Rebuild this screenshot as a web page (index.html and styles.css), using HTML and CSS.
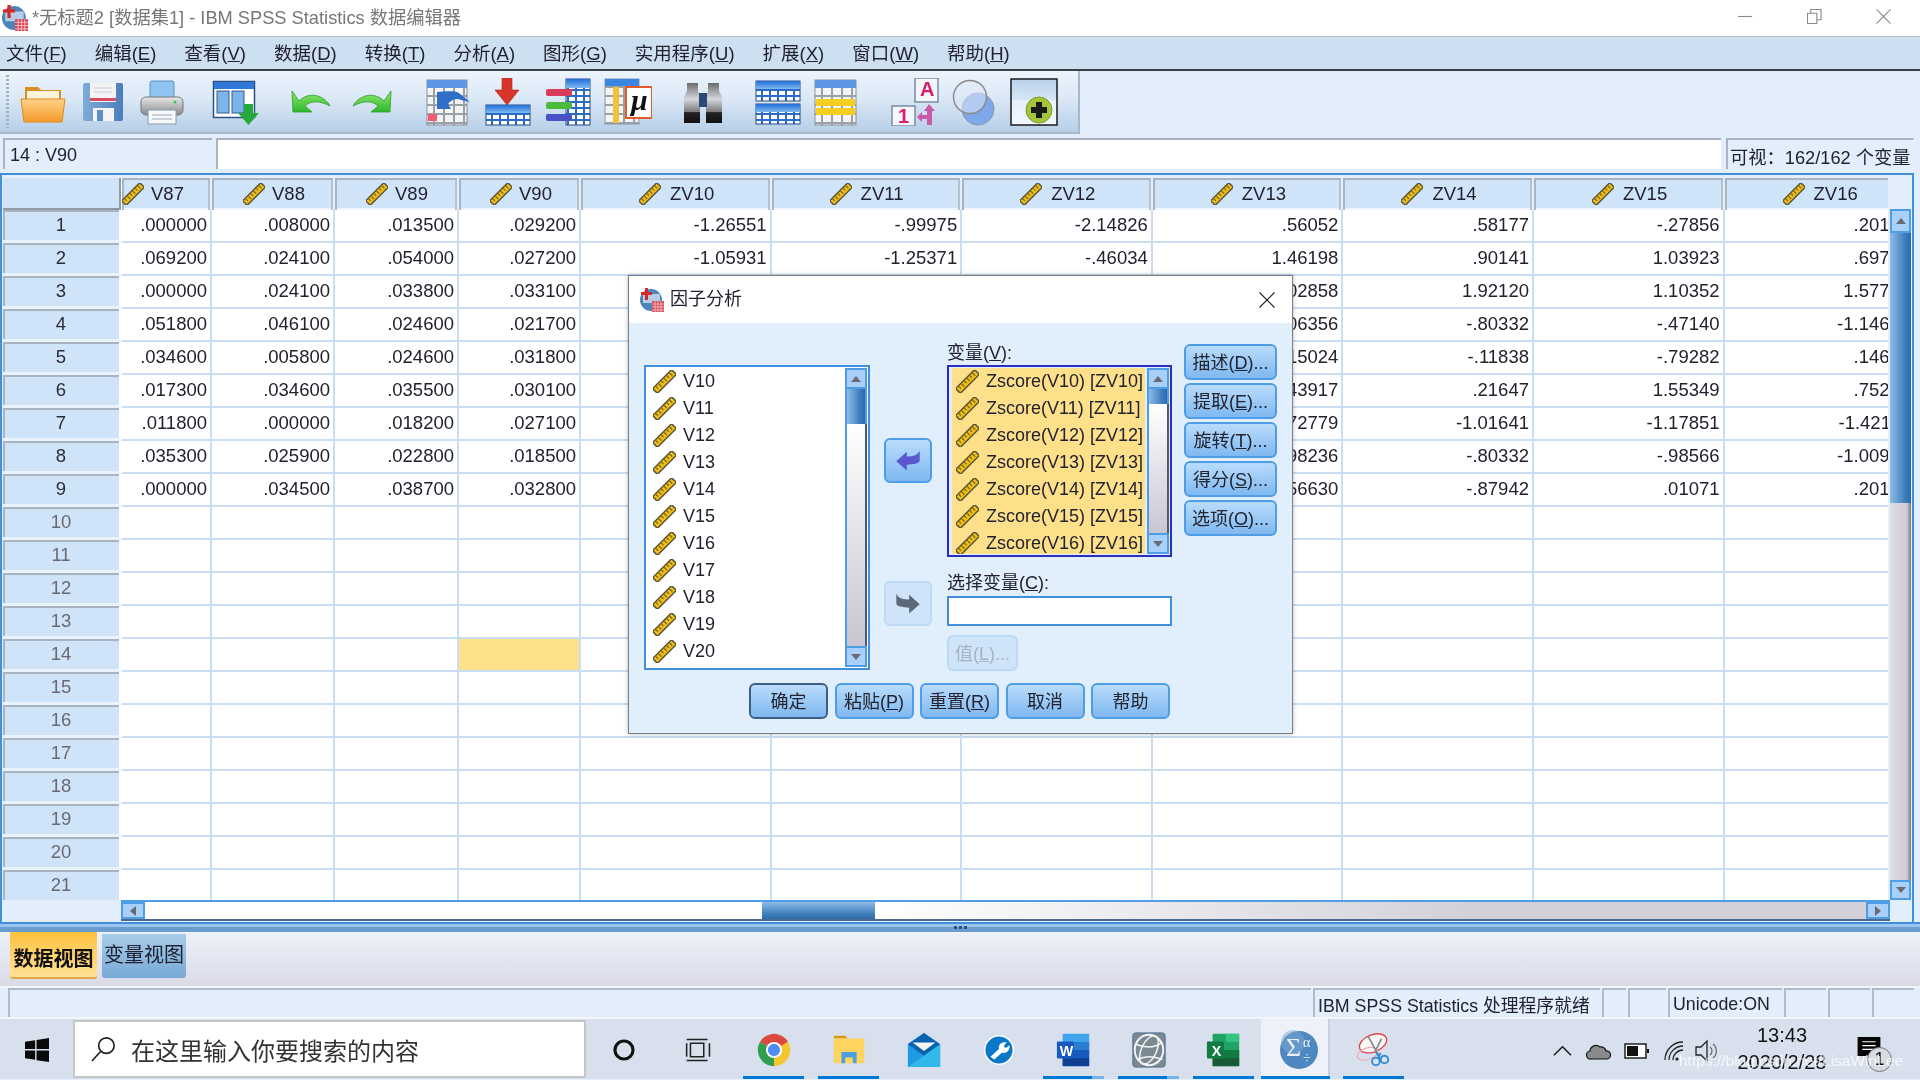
FILE: index.html
```html
<!DOCTYPE html>
<html lang="zh-CN">
<head>
<meta charset="utf-8">
<title>IBM SPSS Statistics 数据编辑器</title>
<link rel="stylesheet" href="styles.css">
</head>
<body>
<svg class="defs" aria-hidden="true">
  <defs>
    <linearGradient id="gOrange" x1="0" y1="0" x2="0" y2="1"><stop offset="0" stop-color="#ffd28a"/><stop offset="1" stop-color="#f59a2a"/></linearGradient>
    <linearGradient id="gGreen" x1="0" y1="0" x2="0" y2="1"><stop offset="0" stop-color="#8fe86a"/><stop offset="1" stop-color="#2fb82f"/></linearGradient>
    <linearGradient id="gBlue" x1="0" y1="0" x2="0" y2="1"><stop offset="0" stop-color="#1f6fd8"/><stop offset="1" stop-color="#7fb8f0"/></linearGradient>
    <linearGradient id="gSave" x1="0" y1="0" x2="1" y2="0"><stop offset="0" stop-color="#7fabd8"/><stop offset="1" stop-color="#4a7db8"/></linearGradient>
    <linearGradient id="gGrey" x1="0" y1="0" x2="0" y2="1"><stop offset="0" stop-color="#e8e8e8"/><stop offset="1" stop-color="#8a8a8a"/></linearGradient>
    <linearGradient id="gBino" x1="0" y1="0" x2="0" y2="1"><stop offset="0" stop-color="#6a6a6a"/><stop offset=".4" stop-color="#d4d8de"/><stop offset=".72" stop-color="#7a7a7a"/><stop offset=".74" stop-color="#222"/><stop offset="1" stop-color="#111"/></linearGradient>
    <linearGradient id="gPlus" x1="0" y1="0" x2="0" y2="1"><stop offset="0" stop-color="#b9d2ec"/><stop offset=".45" stop-color="#d6e6f6"/><stop offset=".46" stop-color="#e6f0fa"/><stop offset="1" stop-color="#f2f7fc"/></linearGradient>
    <pattern id="cellB" width="8" height="6" patternUnits="userSpaceOnUse"><rect width="8" height="6" fill="#2a6cc8"/><rect x="1" y="1" width="6" height="4" fill="#fff"/></pattern>
    <pattern id="cellG" width="10" height="9" patternUnits="userSpaceOnUse"><rect width="10" height="9" fill="#9aa0a8"/><rect x="1" y="1" width="8" height="7" fill="#f4f4f4"/></pattern>
    <symbol id="ruler" viewBox="0 0 24 24">
      <g transform="rotate(-45 12 12)">
        <rect x="-2" y="8.500" width="28" height="7" fill="#eebd12" stroke="#55523f" stroke-width="1.500"/>
        <path d="M2 9.500v3M6 9.500v4M10 9.500v3M14 9.500v4M18 9.500v3M22 9.500v4" stroke="#6a5410" stroke-width="1.100"/>
      </g>
    </symbol>
    <symbol id="appicon" viewBox="0 0 24 24">
      <circle cx="11" cy="12" r="11" fill="#4f84b8"/>
      <path d="M3 6h17v9H3z" fill="#cfe0f0" opacity=".8"/>
      <path d="M5 0h3v4h4v3H8v5H5V7H1V4h4z" fill="#d62828"/>
      <rect x="12" y="13" width="12" height="11" fill="#d84a5a"/>
      <path d="M12 16h12M12 19h12M12 22h12M15 13v11M18 13v11M21 13v11" stroke="#f6c6cc" stroke-width=".8"/>
    </symbol>
    <symbol id="sbup" viewBox="0 0 12 8"><path d="M6 1l5 6H1z" fill="#6a6a72"/></symbol>
    <symbol id="sbdn" viewBox="0 0 12 8"><path d="M6 7L1 1h10z" fill="#6a6a72"/></symbol>
  </defs>
</svg>
<div class="screen">
  <header class="titlebar">
    <svg class="title-icon"><use href="#appicon"/></svg>
    <span class="title-text">*无标题2 [数据集1] - IBM SPSS Statistics 数据编辑器</span>
    <div class="win-ctl">
      <svg class="wc" viewBox="0 0 16 16"><path d="M0 8h15" stroke="#8a8a8a" stroke-width="1.2"/></svg>
      <svg class="wc" viewBox="0 0 16 16"><path d="M.5 4.5h10v11H.5zM4 4.5V.5h11v11h-4.500" fill="none" stroke="#8a8a8a" stroke-width="1.200"/></svg>
      <svg class="wc" viewBox="0 0 16 16"><path d="M.5.500l15 15M15.500.500l-15 15" stroke="#8a8a8a" stroke-width="1.200"/></svg>
    </div>
  </header>

  <nav class="menubar">
    <span>文件(<u>F</u>)</span><span>编辑(<u>E</u>)</span><span>查看(<u>V</u>)</span><span>数据(<u>D</u>)</span><span>转换(<u>T</u>)</span><span>分析(<u>A</u>)</span><span>图形(<u>G</u>)</span><span>实用程序(<u>U</u>)</span><span>扩展(<u>X</u>)</span><span>窗口(<u>W</u>)</span><span>帮助(<u>H</u>)</span>
  </nav>

  <div class="toolbar-row">
    <div class="toolbar">
      <i class="grip"></i>
      <svg class="tb" viewBox="0 0 48 48"><path d="M6 9h13l3 3h20v10H6z" fill="#d98f22"/><path d="M8 13h32v10H8z" fill="#fff3dc"/><path d="M2 21h44l-3 23H5z" fill="url(#gOrange)" stroke="#d98a20"/></svg>
      <svg class="tb m12" viewBox="0 0 48 48"><path d="M6 5h36a2 2 0 0 1 2 2v34a2 2 0 0 1-2 2H6a2 2 0 0 1-2-2V7a2 2 0 0 1 2-2z" fill="url(#gSave)"/><rect x="11" y="5" width="26" height="19" fill="#f3f3f3"/><rect x="11" y="20" width="26" height="3" fill="#d64a64"/><path d="M15 10h18M15 14h18" stroke="#c4ccd6"/><rect x="14" y="30" width="21" height="13" fill="#f4f4f4"/><rect x="18" y="32" width="6" height="11" fill="#5b8fcc"/></svg>
      <svg class="tb m11" viewBox="0 0 48 48"><rect x="12" y="3" width="24" height="20" rx="2" fill="#8fc4f2" stroke="#5a92c8"/><rect x="3" y="19" width="42" height="18" rx="5" fill="url(#gGrey)" stroke="#77777f"/><circle cx="37" cy="24" r="1.500" fill="#37c85a"/><rect x="10" y="32" width="28" height="14" fill="#f6f8fa" stroke="#8a9aaa"/><path d="M14 37h20M14 41h20" stroke="#9ab"/></svg>
      <svg class="tb m26" viewBox="0 0 48 48"><rect x="1.500" y="3.500" width="41" height="36" fill="#fff" stroke="#2f4f80" stroke-width="1.500"/><rect x="2" y="4" width="40" height="7" fill="#2f78d8"/><rect x="5" y="13" width="12" height="22" fill="#7fb4e8" stroke="#2f5f98"/><rect x="20" y="13" width="12" height="22" fill="#7fb4e8" stroke="#2f5f98"/><path d="M32 26h9v9h6L36.500 47 26 35h6z" fill="#25a83c"/></svg>
      <svg class="tb m27" viewBox="0 0 48 48"><path d="M5 13l1 21h19l-7-6c5-5 14-6 25 0-6-11-21-15-31-5z" fill="url(#gGreen)" stroke="#2a9a2a" stroke-width=".800"/></svg>
      <svg class="tb m13" viewBox="0 0 48 48"><g transform="matrix(-1 0 0 1 48 0)"><path d="M5 13l1 21h19l-7-6c5-5 14-6 25 0-6-11-21-15-31-5z" fill="url(#gGreen)" stroke="#2a9a2a" stroke-width=".800"/></g></svg>
      <svg class="tb m28" viewBox="0 0 48 48"><rect x="3" y="2" width="40" height="45" fill="url(#cellG)" stroke="#8a8f98"/><rect x="3" y="2" width="40" height="8" fill="#5d97e4"/><rect x="4" y="36" width="9" height="7" fill="#ef5b72"/><path d="M13 31V14c6 0 16-2 22 1l11 9-9-2c-4-2-9-1-13 4l3 5z" fill="#2f6fc8"/></svg>
      <svg class="tb m12" viewBox="0 0 48 48"><path d="M18 0h10v12h7L23 27 11 12h7z" fill="#d8342a" stroke="#9e2a1c" stroke-width=".600"/><rect x="2" y="27" width="44" height="20" fill="url(#cellB)" stroke="#2a4a80"/><rect x="2" y="27" width="44" height="8" fill="url(#gBlue)"/></svg>
      <svg class="tb m12" viewBox="0 0 48 48"><rect x="22" y="1" width="24" height="46" fill="url(#cellB)" stroke="#2a4a80"/><rect x="22" y="1" width="24" height="9" fill="url(#gBlue)"/><rect x="2" y="11" width="26" height="7" rx="2" fill="#d83c5a"/><rect x="2" y="24" width="26" height="7" rx="2" fill="#4cba3a"/><rect x="2" y="36" width="26" height="7" rx="2" fill="#4a50c8"/></svg>
      <svg class="tb m12" viewBox="0 0 48 48"><rect x="1" y="1" width="34" height="45" fill="url(#cellG)" stroke="#8a96a8"/><rect x="1" y="1" width="34" height="7" fill="#3a86e0"/><rect x="9" y="9" width="6" height="36" fill="#efc43a"/><rect x="22" y="9" width="26" height="31" fill="#fff" stroke="#e25a2a" stroke-width="2"/><text x="27" y="32" class="mu">μ</text></svg>
      <svg class="tb m27" viewBox="0 0 48 48"><path d="M8 5h11v8l2 6v26H5V19l3-6zM29 5h11v8l3 6v26H27V19l2-6z" fill="url(#gBino)"/><rect x="20" y="15" width="8" height="14" fill="#2c4a78"/></svg>
      <svg class="tb m27" viewBox="0 0 48 48"><rect x="2" y="3" width="44" height="20" fill="url(#cellB)" stroke="#2a4a80"/><rect x="2" y="3" width="44" height="8" fill="url(#gBlue)"/><rect x="2" y="26" width="44" height="20" fill="url(#cellB)" stroke="#2a4a80"/><rect x="2" y="26" width="44" height="8" fill="url(#gBlue)"/></svg>
      <svg class="tb m10" viewBox="0 0 48 48"><rect x="3" y="2" width="41" height="45" fill="url(#cellG)" stroke="#8a8f98"/><rect x="3" y="2" width="41" height="8" fill="#5d97e4"/><rect x="4" y="21" width="39" height="7" fill="#f4cf22"/><rect x="4" y="30" width="39" height="7" fill="#f4cf22"/></svg>
      <svg class="tb m31" viewBox="0 0 48 48"><rect x="24" y="0" width="23" height="24" fill="#f4f6fa" stroke="#7a8ca4" stroke-width="1.500"/><text x="29" y="18" class="pinkch">A</text><rect x="1" y="28" width="23" height="20" fill="#f4f6fa" stroke="#7a8ca4" stroke-width="1.500"/><text x="7" y="45" class="pinkch">1</text><path d="M38 26l6 7h-3v14h-5v-6h-5v3l-5-5 5-5v3h5V33h-3z" fill="#c85aa8"/></svg>
      <svg class="tb m12" viewBox="0 0 48 48"><circle cx="27" cy="31" r="16" fill="#7fa8e8" stroke="#8a94a8"/><circle cx="19" cy="19" r="16.500" fill="#dfe8f6" fill-opacity=".55" stroke="#8a8a8a" stroke-width="1.500"/></svg>
      <svg class="tb m11 tb-big" viewBox="0 0 48 48"><rect x="1" y="1" width="46" height="46" fill="url(#gPlus)" stroke="#1a1a1a" stroke-width="1.500"/><circle cx="29" cy="32" r="13" fill="#a4c43a" stroke="#7f9a2a"/><path d="M26 24h6v5h5v6h-5v5h-6v-5h-5v-6h5z" fill="#1a1a1a"/></svg>
    </div>
  </div>

  <div class="formula-row">
    <div class="cell-name">14 : V90</div>
    <div class="cell-edit"></div>
    <div class="visible-box">可视：162/162 个变量</div>
  </div>

  <section class="grid-frame">
    <div class="table-wrap">
      <table class="sheet">
        <colgroup><col class="c-rh"><col class="c-87"><col class="c-88"><col class="c-89"><col class="c-90"><col class="c-z"><col class="c-z"><col class="c-z"><col class="c-z"><col class="c-z"><col class="c-z"><col class="c-z"></colgroup>
        <thead>
          <tr>
            <th class="corner"></th>
            <th class="hd p0"><svg class="rl"><use href="#ruler"/></svg>V87</th>
            <th class="hd p-v"><svg class="rl"><use href="#ruler"/></svg>V88</th>
            <th class="hd p-v"><svg class="rl"><use href="#ruler"/></svg>V89</th>
            <th class="hd p-v"><svg class="rl"><use href="#ruler"/></svg>V90</th>
            <th class="hd p-z"><svg class="rl"><use href="#ruler"/></svg>ZV10</th>
            <th class="hd p-z"><svg class="rl"><use href="#ruler"/></svg>ZV11</th>
            <th class="hd p-z"><svg class="rl"><use href="#ruler"/></svg>ZV12</th>
            <th class="hd p-z"><svg class="rl"><use href="#ruler"/></svg>ZV13</th>
            <th class="hd p-z"><svg class="rl"><use href="#ruler"/></svg>ZV14</th>
            <th class="hd p-z"><svg class="rl"><use href="#ruler"/></svg>ZV15</th>
            <th class="hd p-z"><svg class="rl"><use href="#ruler"/></svg>ZV16</th>
          </tr>
        </thead>
        <tbody>
          <tr><th class="rh">1</th><td>.000000</td><td>.008000</td><td>.013500</td><td>.029200</td><td>-1.26551</td><td>-.99975</td><td>-2.14826</td><td>.56052</td><td>.58177</td><td>-.27856</td><td>.20177</td></tr>
          <tr><th class="rh">2</th><td>.069200</td><td>.024100</td><td>.054000</td><td>.027200</td><td>-1.05931</td><td>-1.25371</td><td>-.46034</td><td>1.46198</td><td>.90141</td><td>1.03923</td><td>.69712</td></tr>
          <tr><th class="rh">3</th><td>.000000</td><td>.024100</td><td>.033800</td><td>.033100</td><td></td><td></td><td></td><td>1.02858</td><td>1.92120</td><td>1.10352</td><td>1.57720</td></tr>
          <tr><th class="rh">4</th><td>.051800</td><td>.046100</td><td>.024600</td><td>.021700</td><td></td><td></td><td></td><td>-.06356</td><td>-.80332</td><td>-.47140</td><td>-1.14612</td></tr>
          <tr><th class="rh">5</th><td>.034600</td><td>.005800</td><td>.024600</td><td>.031800</td><td></td><td></td><td></td><td>.15024</td><td>-.11838</td><td>-.79282</td><td>.14612</td></tr>
          <tr><th class="rh">6</th><td>.017300</td><td>.034600</td><td>.035500</td><td>.030100</td><td></td><td></td><td></td><td>.43917</td><td>.21647</td><td>1.55349</td><td>.75212</td></tr>
          <tr><th class="rh">7</th><td>.011800</td><td>.000000</td><td>.018200</td><td>.027100</td><td></td><td></td><td></td><td>.72779</td><td>-1.01641</td><td>-1.17851</td><td>-1.42112</td></tr>
          <tr><th class="rh">8</th><td>.035300</td><td>.025900</td><td>.022800</td><td>.018500</td><td></td><td></td><td></td><td>.98236</td><td>-.80332</td><td>-.98566</td><td>-1.00912</td></tr>
          <tr><th class="rh">9</th><td>.000000</td><td>.034500</td><td>.038700</td><td>.032800</td><td></td><td></td><td></td><td>.56630</td><td>-.87942</td><td>.01071</td><td>.20177</td></tr>
          <tr><th class="rh dim">10</th><td></td><td></td><td></td><td></td><td></td><td></td><td></td><td></td><td></td><td></td><td></td></tr>
          <tr><th class="rh dim">11</th><td></td><td></td><td></td><td></td><td></td><td></td><td></td><td></td><td></td><td></td><td></td></tr>
          <tr><th class="rh dim">12</th><td></td><td></td><td></td><td></td><td></td><td></td><td></td><td></td><td></td><td></td><td></td></tr>
          <tr><th class="rh dim">13</th><td></td><td></td><td></td><td></td><td></td><td></td><td></td><td></td><td></td><td></td><td></td></tr>
          <tr><th class="rh dim">14</th><td></td><td></td><td></td><td class="sel"></td><td></td><td></td><td></td><td></td><td></td><td></td><td></td></tr>
          <tr><th class="rh dim">15</th><td></td><td></td><td></td><td></td><td></td><td></td><td></td><td></td><td></td><td></td><td></td></tr>
          <tr><th class="rh dim">16</th><td></td><td></td><td></td><td></td><td></td><td></td><td></td><td></td><td></td><td></td><td></td></tr>
          <tr><th class="rh dim">17</th><td></td><td></td><td></td><td></td><td></td><td></td><td></td><td></td><td></td><td></td><td></td></tr>
          <tr><th class="rh dim">18</th><td></td><td></td><td></td><td></td><td></td><td></td><td></td><td></td><td></td><td></td><td></td></tr>
          <tr><th class="rh dim">19</th><td></td><td></td><td></td><td></td><td></td><td></td><td></td><td></td><td></td><td></td><td></td></tr>
          <tr><th class="rh dim">20</th><td></td><td></td><td></td><td></td><td></td><td></td><td></td><td></td><td></td><td></td><td></td></tr>
          <tr><th class="rh dim">21</th><td></td><td></td><td></td><td></td><td></td><td></td><td></td><td></td><td></td><td></td><td></td></tr>
        </tbody>
      </table>
    </div>
    <div class="vscroll">
      <div class="sb-btn sb-up"><svg class="sb-arrow"><use href="#sbup"/></svg></div>
      <div class="v-thumb"></div>
      <div class="v-track"></div>
      <div class="sb-btn sb-dn"><svg class="sb-arrow"><use href="#sbdn"/></svg></div>
    </div>
    <div class="hscroll">
      <div class="sb-btn h-btn"><svg class="sb-arrow rot-l"><use href="#sbup"/></svg></div>
      <div class="h-track-a"></div>
      <div class="h-thumb"></div>
      <div class="h-track-b"></div>
      <div class="sb-btn h-btn"><svg class="sb-arrow rot-r"><use href="#sbup"/></svg></div>
    </div>
  </section>

  <div class="splitter"><i></i><i></i><i></i></div>

  <div class="tabs">
    <div class="tab tab-on">数据视图</div>
    <div class="tab tab-off">变量视图</div>
  </div>

  <footer class="status">
    <div class="st st-main"></div>
    <div class="st st-proc">IBM SPSS Statistics 处理程序就绪</div>
    <div class="st st-a"></div>
    <div class="st st-b"></div>
    <div class="st st-uni">Unicode:ON</div>
    <div class="st st-c"></div>
    <div class="st st-c"></div>
    <div class="st st-c"></div>
  </footer>

  <div class="taskbar">
    <div class="start">
      <svg class="win" viewBox="0 0 26 26"><path d="M0 4l11-1.600V12H0zM12.500 2.200L26 0v12H12.500zM0 13.500h11v10L0 22zM12.500 13.500H26V26l-13.500-2z" fill="#0a0a0a"/></svg>
    </div>
    <div class="search">
      <svg class="s-ico" viewBox="0 0 28 28"><circle cx="17" cy="10" r="8" fill="none" stroke="#222" stroke-width="1.700"/><path d="M11 16L2 26" stroke="#222" stroke-width="1.700"/></svg>
      <span>在这里输入你要搜索的内容</span>
    </div>
    <div class="tk"><svg class="tk-ico cort" viewBox="0 0 40 40"><circle cx="20" cy="20" r="10" fill="none" stroke="#111" stroke-width="3.500"/></svg></div>
    <div class="tk"><svg class="tk-ico" viewBox="0 0 40 40"><path d="M7 9h22M7 31h22M11 13h14v14H11zM31 13v14M7 13v14" fill="none" stroke="#222" stroke-width="1.600"/></svg></div>
    <div class="tk on"><svg class="tk-ico" viewBox="0 0 40 40"><path d="M20 20L5.280 11.500A17 17 0 0 1 34.720 11.500Z" fill="#db4a3d"/><path d="M20 20L34.720 11.500A17 17 0 0 1 20 37Z" fill="#f5c62d"/><path d="M20 20L20 37A17 17 0 0 1 5.280 11.500Z" fill="#2f9e4f"/><circle cx="20" cy="20" r="8.500" fill="#fff"/><circle cx="20" cy="20" r="6.500" fill="#4f8df5"/></svg></div>
    <div class="tk on"><svg class="tk-ico" viewBox="0 0 40 40"><path d="M4 5h12l3 3H4z" fill="#d99a12"/><rect x="4" y="8" width="32" height="26" rx="1" fill="#ffd45e"/><path d="M12 34V22h16v12h-4v-6h-8v6z" fill="#4d9fe0"/></svg></div>
    <div class="tk"><svg class="tk-ico" viewBox="0 0 40 40"><path d="M3 14L20 2l17 12v24H3z" fill="#1f9be0"/><path d="M3 14L20 2l17 12-17 12z" fill="#0a62ae"/><path d="M8 12h24l-12 9z" fill="#f4f4f4"/><path d="M37 14v24H3z" fill="#39c4f0" opacity=".7"/></svg></div>
    <div class="tk"><svg class="tk-ico" viewBox="0 0 40 40"><circle cx="20" cy="20" r="15" fill="#0a78c8" stroke="#fff" stroke-width="1.500"/><path d="M11 27l9-8c-1-5 3-8 8-7l-3 4 2 2 4-3c1 5-3 9-8 8l-8 7z" fill="#fff"/></svg></div>
    <div class="tk on part"><svg class="tk-ico" viewBox="0 0 40 40"><rect x="8" y="3" width="28" height="34" rx="1" fill="#41a5ee"/><rect x="8" y="11.500" width="28" height="8.500" fill="#2b7cd3"/><rect x="8" y="20" width="28" height="8.500" fill="#185abd"/><rect x="8" y="28.500" width="28" height="8.500" fill="#103f91"/><rect x="2" y="11" width="18" height="18" rx="1" fill="#185abd"/><text x="5" y="26" class="ltr">W</text></svg></div>
    <div class="tk on part"><svg class="tk-ico" viewBox="0 0 40 40"><rect x="3" y="2" width="34" height="36" rx="3" fill="#7a8a94" stroke="#4a6a90"/><ellipse cx="20" cy="20" rx="15" ry="16" fill="none" stroke="#f4f4f4" stroke-width="2"/><ellipse cx="20" cy="20" rx="8" ry="16" fill="none" stroke="#f4f4f4" stroke-width="1.600" transform="rotate(25 20 20)"/><path d="M6 14c10 4 20 4 28-2M8 30c8-4 16-4 26 0" fill="none" stroke="#f4f4f4" stroke-width="1.600"/></svg></div>
    <div class="tk on"><svg class="tk-ico" viewBox="0 0 40 40"><rect x="8" y="3" width="28" height="34" rx="1" fill="#21a366"/><rect x="22" y="3" width="14" height="8.500" fill="#33c481"/><rect x="8" y="20" width="28" height="8.500" fill="#107c41"/><rect x="8" y="28.500" width="28" height="8.500" fill="#185c37"/><rect x="2" y="11" width="18" height="18" rx="1" fill="#107c41"/><text x="7" y="26" class="ltr">X</text></svg></div>
    <div class="tk active"><svg class="tk-ico sig" viewBox="0 0 40 40"><circle cx="20" cy="20" r="19" fill="#4f87c0"/><circle cx="14" cy="12" r="12" fill="#7fa9d4" opacity=".5"/><text x="7" y="26" class="sigma">Σ</text><text x="24" y="17" class="alpha">α</text><text x="24" y="33" class="alpha">÷</text></svg></div>
    <div class="tk on"><svg class="tk-ico" viewBox="0 0 40 40"><ellipse cx="19" cy="13" rx="15" ry="9" fill="#f8f8f8" stroke="#e2404a" stroke-width="1.400" transform="rotate(-22 19 13)"/><ellipse cx="13" cy="24" rx="11" ry="6" fill="none" stroke="#eeb0b4" stroke-width="1.300" transform="rotate(-18 13 24)"/><path d="M14 6l11 20M28 8L21 22" stroke="#8a8a8a" stroke-width="1.800"/><circle cx="22" cy="32" r="4" fill="none" stroke="#2f8ad0" stroke-width="2"/><circle cx="31" cy="30" r="4" fill="none" stroke="#2f8ad0" stroke-width="2"/><path d="M22 22l5 8M25 27l2 -4" stroke="#2f8ad0" stroke-width="2"/></svg></div>
    <div class="tray">
      <svg class="tray-ico t1" viewBox="0 0 20 20"><path d="M1 15L10 6l9 9" fill="none" stroke="#111" stroke-width="1.400"/></svg>
      <svg class="tray-ico t2" viewBox="0 0 26 20"><path d="M5 18a4 4 0 0 1-1-8 6 6 0 0 1 10-4 5 5 0 0 1 6 4 4 4 0 0 1 1 8z" fill="#8a8a8a" stroke="#111" stroke-width="1.200"/></svg>
      <svg class="tray-ico t3" viewBox="0 0 26 20"><rect x="1" y="3" width="21" height="14" fill="#fff" stroke="#111" stroke-width="1.400"/><rect x="3" y="5" width="11" height="10" fill="#111"/><rect x="23" y="8" width="2" height="4" fill="#111"/></svg>
      <svg class="tray-ico t4" viewBox="0 0 24 24"><path d="M1 21A18 18 0 0 1 19 3M5 21A14 14 0 0 1 19 7M9 21A10 10 0 0 1 19 11" fill="none" stroke="#222" stroke-width="1.300" transform="translate(2 0)"/><circle cx="15" cy="20" r="1.500" fill="#111"/></svg>
      <svg class="tray-ico t5" viewBox="0 0 26 24"><path d="M2 8h5l6-6v20l-6-6H2z" fill="none" stroke="#222" stroke-width="1.300"/><path d="M16 8a5 5 0 0 1 0 8M19 5a9 9 0 0 1 0 14" fill="none" stroke="#666" stroke-width="1.200"/></svg>
      <div class="clock"><span>13:43</span><span>2020/2/28</span></div>
      <div class="notif">
        <svg class="notif-ico" viewBox="0 0 24 20"><path d="M0 0h24v20H0z" fill="#050505"/><path d="M5 5h14M5 9h14M5 13h14" stroke="#fff" stroke-width="1.300"/></svg>
        <span class="badge">1</span>
      </div>
    </div>
    <span class="watermark">https://blog.csdn.net/LisaWinLee</span>
  </div>

  <div class="dialog">
    <div class="dlg-title">
      <svg class="dlg-icon"><use href="#appicon"/></svg>
      <span class="dlg-name">因子分析</span>
      <svg class="dlg-x" viewBox="0 0 16 16"><path d="M.5.500l15 15M15.500.500l-15 15" stroke="#222" stroke-width="1.100"/></svg>
    </div>
    <div class="dlg-body">
      <div class="listbox lb-left">
        <div class="items">
          <div class="it"><svg class="it-r"><use href="#ruler"/></svg>V10</div>
          <div class="it"><svg class="it-r"><use href="#ruler"/></svg>V11</div>
          <div class="it"><svg class="it-r"><use href="#ruler"/></svg>V12</div>
          <div class="it"><svg class="it-r"><use href="#ruler"/></svg>V13</div>
          <div class="it"><svg class="it-r"><use href="#ruler"/></svg>V14</div>
          <div class="it"><svg class="it-r"><use href="#ruler"/></svg>V15</div>
          <div class="it"><svg class="it-r"><use href="#ruler"/></svg>V16</div>
          <div class="it"><svg class="it-r"><use href="#ruler"/></svg>V17</div>
          <div class="it"><svg class="it-r"><use href="#ruler"/></svg>V18</div>
          <div class="it"><svg class="it-r"><use href="#ruler"/></svg>V19</div>
          <div class="it"><svg class="it-r"><use href="#ruler"/></svg>V20</div>
          <div class="it"><svg class="it-r"><use href="#ruler"/></svg>V21</div>
        </div>
        <div class="lb-sb">
          <div class="sb-btn lb-btn"><svg class="sb-arrow"><use href="#sbup"/></svg></div>
          <div class="lb-thumb t-left"></div>
          <div class="lb-track"></div>
          <div class="sb-btn lb-btn"><svg class="sb-arrow"><use href="#sbdn"/></svg></div>
        </div>
      </div>
      <div class="arrows">
        <button class="btn arrow a1"><svg class="arr" viewBox="0 0 24 24"><path d="M11 5L2 13l9 8v-5c5-1 9 0 11-3V4c-2 4-6 5-11 5z" fill="#5a58cc"/></svg></button>
        <button class="btn arrow a2" disabled><svg class="arr" viewBox="0 0 24 24"><path d="M13 5l9 8-9 8v-5c-5-1-9 0-11-3V4c2 4 6 5 11 5z" fill="#5a6a7a"/></svg></button>
      </div>
      <div class="midcol">
        <div class="lab">变量(<u>V</u>):</div>
        <div class="listbox lb-right">
          <div class="items sel-items">
            <div class="it"><svg class="it-r"><use href="#ruler"/></svg>Zscore(V10) [ZV10]</div>
            <div class="it"><svg class="it-r"><use href="#ruler"/></svg>Zscore(V11) [ZV11]</div>
            <div class="it"><svg class="it-r"><use href="#ruler"/></svg>Zscore(V12) [ZV12]</div>
            <div class="it"><svg class="it-r"><use href="#ruler"/></svg>Zscore(V13) [ZV13]</div>
            <div class="it"><svg class="it-r"><use href="#ruler"/></svg>Zscore(V14) [ZV14]</div>
            <div class="it"><svg class="it-r"><use href="#ruler"/></svg>Zscore(V15) [ZV15]</div>
            <div class="it"><svg class="it-r"><use href="#ruler"/></svg>Zscore(V16) [ZV16]</div>
          </div>
          <div class="lb-sb">
            <div class="sb-btn lb-btn"><svg class="sb-arrow"><use href="#sbup"/></svg></div>
            <div class="lb-thumb t-right"></div>
            <div class="lb-track"></div>
            <div class="sb-btn lb-btn"><svg class="sb-arrow"><use href="#sbdn"/></svg></div>
          </div>
        </div>
        <div class="lab lab2">选择变量(<u>C</u>):</div>
        <div class="inp"></div>
        <button class="btn btn-val" disabled>值(<u>L</u>)...</button>
      </div>
      <div class="rightcol">
        <button class="btn side">描述(<u>D</u>)...</button>
        <button class="btn side">提取(<u>E</u>)...</button>
        <button class="btn side">旋转(<u>T</u>)...</button>
        <button class="btn side">得分(<u>S</u>)...</button>
        <button class="btn side">选项(<u>O</u>)...</button>
      </div>
    </div>
    <div class="dlg-foot">
      <button class="btn foot def">确定</button>
      <button class="btn foot">粘贴(<u>P</u>)</button>
      <button class="btn foot">重置(<u>R</u>)</button>
      <button class="btn foot">取消</button>
      <button class="btn foot">帮助</button>
    </div>
  </div>
</div>
</body>
</html>
```
FILE: styles.css
```css
* { box-sizing: border-box; }
html, body { margin: 0; padding: 0; }
body { width: 1920px; height: 1080px; overflow: hidden; background: #fff; }
.defs { position: absolute; width: 0; height: 0; }

.screen {
  position: relative;
  width: 1920px;
  height: 1080px;
  overflow: hidden;
  display: flex;
  flex-direction: column;
  font-family: "Liberation Sans", "Noto Sans CJK SC", sans-serif;
  font-size: 18.5px;
  color: #22222e;
  background: #e2eefb;
  filter: blur(.45px);
}

/* title bar */
.titlebar { flex: 0 0 36px; display: flex; align-items: center; background: #fff; padding: 0 0 4px 2px; }
.title-icon { width: 26px; height: 26px; margin-top: 3px; }
.title-text { margin-left: 4px; color: #777; font-size: 18.25px; }
.win-ctl { margin-left: auto; display: flex; align-items: center; gap: 54px; padding-right: 29px; }
.wc { width: 15px; height: 15px; }

/* menu */
.menubar { flex: 0 0 35px; display: flex; align-items: center; gap: 28px; padding: 0 0 2px 6px; background: #cde0f2; border-top: 1px solid #b4bcc6; border-bottom: 2px solid #3a3f46; }

/* toolbar */
.toolbar-row { flex: 0 0 63px; background: #e2eefb; }
.toolbar { position: relative; width: 1080px; height: 63px; display: flex; align-items: center; padding-left: 19px; background: linear-gradient(#ecf4fd, #dbe8f6 45%, #b6cfe8); border-right: 2px solid #a9b8c8; border-bottom: 2px solid #a9b8c8; }
.grip { position: absolute; left: 6px; top: 4px; bottom: 4px; width: 3px; background: repeating-linear-gradient(#9fb0c2 0 2px, transparent 2px 4px); }
.tb { width: 48px; height: 48px; flex: none; }
.tb-big { height: 50px; }
.m10 { margin-left: 10px; }
.m11 { margin-left: 11px; }
.m12 { margin-left: 12px; }
.m13 { margin-left: 13px; }
.m26 { margin-left: 26px; }
.m27 { margin-left: 27px; }
.m28 { margin-left: 28px; }
.m31 { margin-left: 31px; }
.mu { font-family: "Liberation Serif", serif; font-size: 30px; font-style: italic; font-weight: 700; fill: #111; }
.pinkch { font-size: 20px; font-weight: 700; fill: #d81e6e; }

/* formula */
.formula-row { flex: 0 0 39px; display: flex; padding: 4px 6px 4px 3px; gap: 4px; }
.cell-name { width: 209px; display: flex; align-items: center; padding: 2px 0 0 5px; border-top: 2px solid #aab2bc; border-left: 2px solid #aab2bc; font-size: 18px; }
.cell-edit { flex: 1; background: #fff; border-top: 2px solid #aab2bc; border-left: 2px solid #aab2bc; }
.visible-box { width: 188px; display: flex; align-items: center; padding: 2px 0 0 2px; margin-left: 1px; border-top: 2px solid #aab2bc; border-left: 2px solid #aab2bc; border-right: 1px solid #eef; white-space: nowrap; font-size: 18.25px; }

/* data grid */
.grid-frame { flex: 0 0 749px; margin-right: 6px; display: grid; grid-template-columns: 1885px 22px; grid-template-rows: 722px 21px; padding-top: 3px; background: #e2eefb; border: 2px solid #3f8fdc; border-bottom: 0; border-right-width: 2px; }
.table-wrap { overflow: hidden; background: #fff; width: 1885px; margin-left: 1px; }
.sheet { width: 1912px; table-layout: fixed; border-collapse: separate; border-spacing: 0; font-size: 18.5px; }
.c-rh { width: 119px; }
.c-87 { width: 90px; }
.c-88 { width: 123px; }
.c-89 { width: 124px; }
.c-90 { width: 122px; }
.c-z { width: 190.6px; }
.sheet th, .sheet td { padding: 0; height: 33px; font-weight: 400; }
.sheet thead th { height: 32px; }
.corner { background: #cfe3f9; box-shadow: inset 0 -2px 0 #8f9aa8, inset -2px 0 0 #8f9aa8; border-right: 1px solid #fff; }
.hd { background: #cfe3f9; text-align: left; white-space: nowrap; overflow: hidden; box-shadow: inset 0 2px 0 #a9b4c0, inset 2px 0 0 #a9b4c0, inset -2px 0 0 #b7c1cc, inset 0 -2px 0 #eef5fc; border-right: 2px solid #e2eefb; }
.p0 { padding-left: 0 !important; }
.p-v { padding-left: 31px !important; }
.p-z { padding-left: 58px !important; }
.rl { width: 22px; height: 22px; vertical-align: -5px; margin-right: 7px; }
.p-z .rl { margin-right: 9px; }
.sheet td { text-align: right; padding: 0 3px 2px 0; background: #fff; border-right: 2px solid #c9ddf3; border-bottom: 2px solid #c9ddf3; white-space: nowrap; overflow: hidden; }
.sheet td.sel { background: #ffe08a; }
.rh { background: #cfe3f9; text-align: center; color: #2c2c38; border-right: 3px solid #fff; border-bottom: 3px solid #eaf2fb; box-shadow: inset 2px 2px 0 #a9b4c0; }
.dim { color: #6a6a72; }

/* scrollbars */
.sb-btn { display: flex; align-items: center; justify-content: center; background: #a8d0fb; border: 2px solid #4f9de6; flex: none; }
.sb-arrow { width: 12px; height: 8px; }
.vscroll { display: flex; flex-direction: column; grid-row: 1; grid-column: 2; padding-top: 31px; margin-left: 3px; width: 21px; }
.sb-up { height: 24px; }
.sb-dn { height: 20px; }
.v-thumb { flex: 0 0 270px; background: linear-gradient(90deg, #8fbbe6, #3f7fbe 70%, #2f6aa8); }
.v-track { flex: 1; background: linear-gradient(90deg, #dedde6, #cfccd6 80%, #777); }
.hscroll { grid-row: 2; grid-column: 1; margin-left: 119px; margin-right: -3px; display: flex; border-top: 2px solid #4f9de6; border-bottom: 2px solid #4a6a90; }
.h-btn { width: 24px; }
.rot-l { transform: rotate(-90deg); }
.rot-r { transform: rotate(90deg); }
.h-track-a { flex: 0 0 617px; background: #fff; }
.h-thumb { flex: 0 0 113px; background: linear-gradient(#8fbbe6, #3f7fbe 70%, #2f6aa8); }
.h-track-b { flex: 1; background: linear-gradient(90deg, #fff, #d3d0da 60%); }

/* splitter */
.splitter { flex: 0 0 10px; display: flex; align-items: center; justify-content: center; gap: 2px; background: linear-gradient(#3f8fdc 0 2px, #9cc6ef 2px 5px, #6a9ccf 5px); }
.splitter i { width: 3px; height: 3px; background: #2f4f7a; }

/* tabs */
.tabs { flex: 0 0 56px; display: flex; gap: 5px; padding-left: 10px; background: linear-gradient(#edf2fa, #dadae6); border-bottom: 2px solid #f2f5fa; align-items: flex-start; }
.tab { width: 87px; display: flex; align-items: center; justify-content: center; font-size: 20px; color: #202030; }
.tab-on { height: 47px; padding-top: 6px; font-weight: 700; color: #111; background: linear-gradient(#ffc13e, #ffe296); border-bottom: 2px solid #e0a84a; border-radius: 0 0 3px 3px; }
.tab-off { width: 84px; height: 44px; margin-top: 2px; padding-bottom: 6px; background: linear-gradient(#a9cdea, #78a9d6); border-radius: 0 0 3px 3px; }

/* status bar */
.status { flex: 0 0 30px; display: flex; padding-left: 8px; padding-right: 5px; background: #e2eefb; font-size: 17.8px; border-bottom: 2px solid #f4f6fa; }
.st { border-top: 2px solid #b3bac4; border-left: 2px solid #b3bac4; display: flex; align-items: center; padding: 1px 0 0 3px; white-space: nowrap; margin-left: 2px; }
.st-main { width: 1303px; margin-left: 0; }
.st-proc { width: 287px; }
.st-a { width: 24px; }
.st-b { width: 38px; }
.st-uni { width: 114px; }
.st-c { width: 42px; }

/* taskbar */
.taskbar { position: relative; flex: 0 0 60px; display: flex; background: #d8e0ee; }
.start { width: 73px; display: flex; align-items: center; justify-content: center; padding-top: 2px; }
.win { width: 24px; height: 24px; }
.search { width: 513px; height: 58px; margin-top: 1px; display: flex; align-items: center; gap: 14px; padding: 0 0 0 15px; background: #fff; border: 2px solid #c6c6c6; font-family: "Noto Sans CJK SC", sans-serif; font-size: 24px; color: #333; white-space: nowrap; }
.s-ico { width: 27px; height: 27px; }
.tk { position: relative; width: 75px; display: flex; align-items: center; justify-content: center; padding-top: 1px; }
.tk-ico { width: 38px; height: 38px; }
.cort { width: 36px; height: 36px; }
.sig { width: 40px; height: 40px; }
.tk.on::after, .tk.active::after { content: ""; position: absolute; left: 7px; right: 7px; bottom: 0; height: 3px; background: #0078d7; }
.tk.part::before { content: ""; position: absolute; right: 7px; bottom: 0; width: 12px; height: 3px; background: #78b4ea; z-index: 1; }
.tk.active { background: linear-gradient(90deg, #eef1f8 90%, #c8d0de 90% 92%, #d8e0ee 92%); }
.tk.active::after { left: 0; right: 6px; }
.ltr { font-size: 15px; font-weight: 700; fill: #fff; }
.sigma { font-family: "Liberation Serif", serif; font-size: 26px; fill: #e8f0fa; }
.alpha { font-family: "Liberation Serif", serif; font-size: 14px; fill: #f2f6fc; }
.tray { display: flex; align-items: center; flex: 1; position: relative; }
.tray-ico { flex: none; margin-top: 3px; }
.t1 { width: 19px; height: 19px; margin-left: 142px; }
.t2 { width: 26px; height: 20px; margin-left: 14px; }
.t3 { width: 26px; height: 20px; margin-left: 12px; }
.t4 { width: 24px; height: 24px; margin-left: 12px; }
.t5 { width: 26px; height: 24px; margin-left: 8px; }
.clock { display: flex; flex-direction: column; align-items: center; width: 100px; margin-left: 12px; font-size: 20px; line-height: 27px; margin-top: 0; color: #141414; }
.notif { position: relative; margin: 16px 0 0 25px; width: 26px; height: 40px; }
.notif-ico { display: block; width: 24px; height: 19px; margin-top: 0; }
.badge { position: absolute; left: 10px; top: 10px; width: 25px; height: 25px; border-radius: 50%; background: #d8dbe2; border: 1px solid #777; display: flex; align-items: center; justify-content: center; font-size: 18px; color: #111; }
.watermark { position: absolute; left: 1679px; top: 33px; font-size: 15.5px; color: rgba(255,255,255,.75); white-space: nowrap; }

/* dialog */
.dialog { position: absolute; left: 628px; top: 275px; width: 665px; height: 459px; background: #e1eefb; border: 1px solid #7a7f86; box-shadow: 0 0 4px rgba(40,50,60,.35); display: flex; flex-direction: column; font-size: 18px; }
.dlg-title { flex: 0 0 47px; background: #fff; display: flex; align-items: center; padding: 0 0 0 11px; }
.dlg-icon { width: 24px; height: 24px; margin-right: 6px; }
.dlg-name { margin-top: -5px; }
.dlg-x { width: 16px; height: 16px; margin-left: auto; margin-right: 17px; }
.dlg-body { flex: 0 0 360px; display: flex; padding: 21px 0 0 15px; }
.listbox { display: flex; background: #fff; border: 2px solid #3f8fdc; overflow: hidden; padding: 1px 1px 1px 0; }
.lb-left { width: 226px; height: 305px; margin-top: 21px; }
.lb-right { width: 225px; height: 192px; border-color: #2a2fc4; background: #e4eefa; padding: 1px 1px 1px 2px; }
.items { flex: 1; overflow: hidden; min-width: 0; }
.sel-items { background: #ffe08a; margin-left: 1px; }
.it { display: flex; align-items: center; height: 27px; padding-left: 7px; white-space: nowrap; }
.it-r { width: 23px; height: 23px; margin-right: 7px; flex: none; }
.sel-items .it { padding-left: 4px; }
.lb-sb { flex: 0 0 22px; display: flex; flex-direction: column; margin-left: 2px; }
.lb-btn { height: 21px; }
.lb-thumb { background: linear-gradient(90deg, #8fbbe6, #3f7fbe 70%, #2f6aa8); flex: none; border-left: 2px solid #4f9de6; border-right: 2px solid #4f9de6; }
.t-left { height: 35px; }
.t-right { height: 15px; }
.lb-track { flex: 1; background: linear-gradient(#fff, #c9c6d2); border-left: 2px solid #4f9de6; border-right: 2px solid #4a5a70; }
.arrows { flex: 0 0 75px; display: flex; flex-direction: column; align-items: center; }
.btn { font: inherit; color: #23232e; margin: 0; padding: 0 0 2px; background: linear-gradient(#b9dcfc, #7fb8f0); border: 2px solid #4f9de6; border-radius: 6px; white-space: nowrap; }
.btn[disabled] { background: #cfe4f9; border-color: #bcdaf5; color: #a4b4c4; }
.arrow { width: 48px; height: 45px; display: flex; align-items: center; justify-content: center; }
.a1 { margin-top: 94px; }
.a2 { margin-top: 98px; }
.arr { width: 28px; height: 28px; }
.midcol { flex: 0 0 225px; margin-left: 2px; display: flex; flex-direction: column; }
.lab { height: 21px; line-height: 18px; }
.lab2 { margin-top: 16px; height: 23px; line-height: 20px; }
.inp { height: 30px; background: #fff; border: 2px solid #3f8fdc; }
.btn-val { width: 71px; height: 36px; margin-top: 9px; }
.rightcol { margin-left: 12px; display: flex; flex-direction: column; gap: 3px; }
.side { width: 93px; height: 36px; }
.dlg-foot { flex: none; display: flex; gap: 6.5px; padding-left: 120px; }
.foot { width: 79px; height: 36px; }
.def { border-color: #3d5f84; }
```
